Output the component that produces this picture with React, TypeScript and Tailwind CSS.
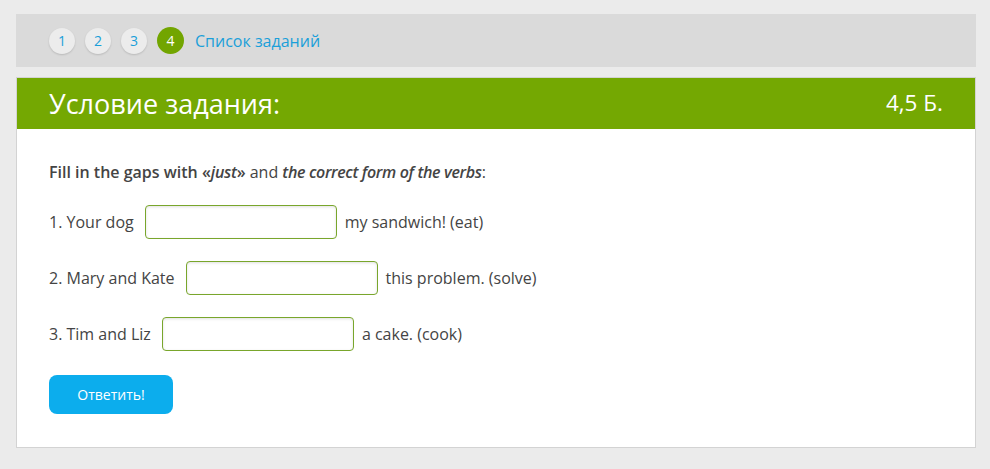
import React from 'react';

const rows = [
  { label: '1. Your dog', rest: 'my sandwich! (eat)' },
  { label: '2. Mary and Kate', rest: 'this problem. (solve)' },
  { label: '3. Tim and Liz', rest: 'a cake. (cook)' },
];

const App: React.FC = () => {
  return (
    <div
      className="min-h-[469px] bg-[#ebebeb] pl-4 pr-[14px] pt-[14px] pb-[22px] text-[#444]"
      style={{ fontFamily: '"Open Sans", "Noto Sans", sans-serif' }}
    >
      {/* task navigation */}
      <div className="flex h-[53px] items-center gap-[10px] bg-[#dadada] pl-[33px]">
        {[1, 2, 3].map((n) => (
          <span
            key={n}
            className="flex h-[26px] w-[26px] items-center justify-center rounded-full bg-[#ececec] text-[14px] text-[#1a9fd9] shadow-[0_1px_2px_rgba(0,0,0,0.15)]"
          >
            {n}
          </span>
        ))}
        <span className="flex h-[27px] w-[27px] items-center justify-center rounded-full bg-[#72a500] text-[14px] text-white">
          4
        </span>
        <a className="ml-[1px] text-[16px] text-[#1a9fd9]">Список заданий</a>
      </div>

      {/* task card */}
      <div className="mt-[10px] border border-[#d3d3d3] bg-white">
        <div className="flex h-[51px] items-center justify-between bg-[#74a802] pl-[32px] pr-[32px] text-white">
          <h1 className="text-[27px] leading-none">Условие задания:</h1>
          <span className="text-[22.5px] leading-none">4,5 Б.</span>
        </div>

        <div className="px-[32px] pt-[32px] pb-[33px] text-[16px]">
          <p className="leading-[22px]">
            <span className="font-semibold">
              Fill in the gaps with «<i className="tracking-[-0.3px]">just</i>»
            </span>{' '}
            and{' '}
            <b className="font-semibold tracking-[-0.35px]">
              <i>the correct form of the verbs</i>
            </b>
            :
          </p>

          <div className="mt-[22px] flex flex-col gap-[22px]">
            {rows.map((r) => (
              <div key={r.label} className="flex items-center gap-[8px]">
                <span className="mr-[3px]">{r.label}</span>
                <input
                  type="text"
                  className="h-[34px] w-[192px] rounded-[4px] border border-[#79a62c] bg-white shadow-[inset_0_1px_3px_rgba(0,0,0,0.12)] outline-none"
                />
                <span>{r.rest}</span>
              </div>
            ))}
          </div>

          <button className="mt-[24px] h-[39px] w-[124px] rounded-[8px] bg-[#0caded] text-[14px] text-white">
            Ответить!
          </button>
        </div>
      </div>
    </div>
  );
};

export default App;
